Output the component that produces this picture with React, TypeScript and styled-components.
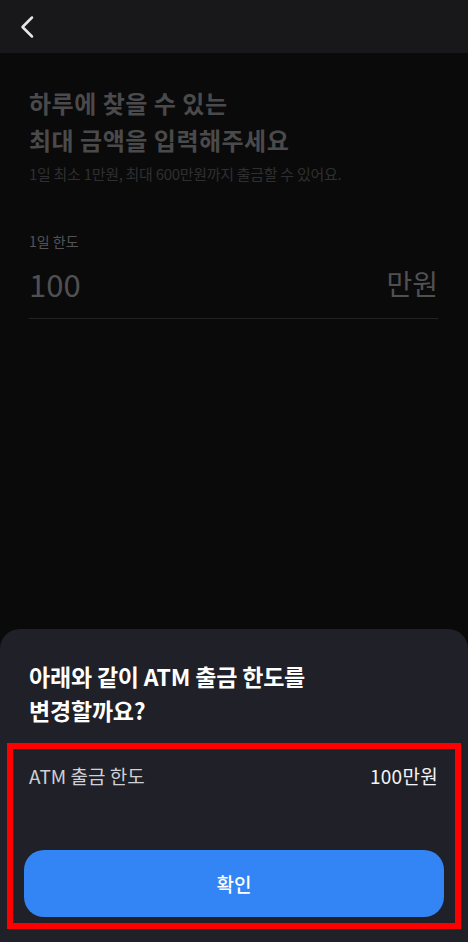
import styled, { createGlobalStyle } from "styled-components";

const GlobalStyle = createGlobalStyle`
  body {
    margin: 0;
    background: #0a0a0a;
    font-family: "Noto Sans CJK KR", "Noto Sans", sans-serif;
  }
`;

const App = () => {
  return (
    <Page>
      <GlobalStyle />
      <Header>
        <BackButton aria-label="뒤로">
          <svg width="14" height="24" viewBox="0 0 14 24" fill="none">
            <path
              d="M12 2.5 L2.5 12 L12 21.5"
              stroke="#e6e6e6"
              strokeWidth="2.5"
              strokeLinecap="round"
              strokeLinejoin="round"
            />
          </svg>
        </BackButton>
      </Header>

      <Content>
        <Title>
          하루에 찾을 수 있는
          <br />
          최대 금액을 입력해주세요
        </Title>
        <Hint>1일 최소 1만원, 최대 600만원까지 출금할 수 있어요.</Hint>

        <FieldLabel>1일 한도</FieldLabel>
        <AmountRow>
          <AmountValue>100</AmountValue>
          <AmountUnit>만원</AmountUnit>
        </AmountRow>
      </Content>

      <Sheet>
        <SheetTitle>
          아래와 같이 ATM 출금 한도를
          <br />
          변경할까요?
        </SheetTitle>
        <SummaryRow>
          <SummaryLabel>ATM 출금 한도</SummaryLabel>
          <SummaryValue>100만원</SummaryValue>
        </SummaryRow>
        <ConfirmButton>확인</ConfirmButton>
      </Sheet>

      <Highlight />
    </Page>
  );
};

const Page = styled.div`
  position: relative;
  height: 942px;
  overflow: hidden;
  background: #0a0a0a;
`;

const Header = styled.header`
  height: 53px;
  display: flex;
  align-items: center;
  padding-left: 20px;
  background: #18181b;
`;

const BackButton = styled.button`
  display: flex;
  align-items: center;
  padding: 0;
  border: none;
  background: none;
`;

const Content = styled.main`
  padding: 31px 30px 0 29px;
`;

const Title = styled.h1`
  margin: 0;
  font-size: 24px;
  line-height: 37px;
  font-weight: 700;
  color: #4a4a4c;
  letter-spacing: 0.5px;
`;

const Hint = styled.p`
  margin: 7px 0 0;
  font-size: 15px;
  line-height: 18px;
  color: #2f2f31;
  letter-spacing: -0.3px;
`;

const FieldLabel = styled.div`
  margin-top: 49px;
  font-size: 14px;
  line-height: 18px;
  color: #545456;
`;

const AmountRow = styled.div`
  margin-top: 13px;
  display: flex;
  justify-content: space-between;
  align-items: center;
  height: 40px;
  padding-bottom: 15px;
  border-bottom: 1px solid #232325;
`;

const AmountValue = styled.span`
  font-size: 31px;
  color: #505052;
`;

const AmountUnit = styled.span`
  font-size: 28px;
  color: #505052;
`;

const Sheet = styled.section`
  position: absolute;
  left: 0;
  right: 0;
  bottom: 0;
  height: 313px;
  box-sizing: border-box;
  display: flex;
  flex-direction: column;
  padding: 30px 24px 25px;
  border-radius: 20px 20px 0 0;
  background: #202128;
`;

const SheetTitle = styled.h2`
  margin: 0;
  padding-left: 5px;
  font-size: 23px;
  line-height: 34px;
  font-weight: 700;
  color: #ffffff;
  letter-spacing: -0.2px;
`;

const SummaryRow = styled.div`
  margin-top: 37px;
  padding: 0 6px 0 5px;
  display: flex;
  justify-content: space-between;
  align-items: center;
  line-height: 24px;
  font-size: 19px;
`;

const SummaryLabel = styled.span`
  color: #cfd0d4;
`;

const SummaryValue = styled.span`
  color: #f4f4f6;
  letter-spacing: 0.3px;
`;

const ConfirmButton = styled.button`
  margin-top: auto;
  height: 67px;
  border: none;
  border-radius: 20px;
  background: #3384f4;
  color: #ffffff;
  font-family: inherit;
  font-size: 19px;
  font-weight: 500;
`;

const Highlight = styled.div`
  position: absolute;
  left: 7px;
  top: 743px;
  width: 454px;
  height: 186px;
  box-sizing: border-box;
  border: 6px solid #ff0000;
  pointer-events: none;
`;

export default App;
